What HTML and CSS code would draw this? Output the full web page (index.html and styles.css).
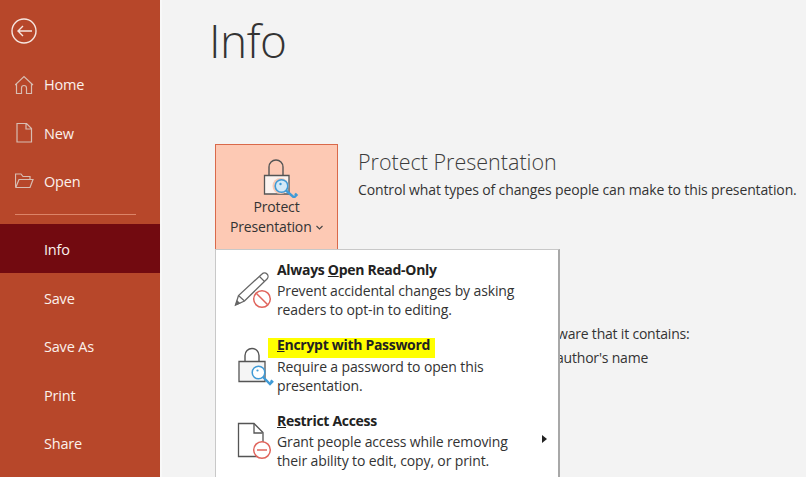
FILE: index.html
```html
<!DOCTYPE html>
<html lang="en">
<head>
<meta charset="utf-8">
<title>Info</title>
<link rel="stylesheet" href="styles.css">
</head>
<body>
<div class="app">
  <nav class="side">
    <div class="back">
      <svg width="26" height="26" viewBox="0 0 26 26" fill="none" stroke="#f6e6e0" stroke-width="1.4"><circle cx="13" cy="13" r="12"/><path d="M21 13H7M12 8L7 13l5 5"/></svg>
    </div>
    <a class="item"><svg class="ico" width="21" height="20" viewBox="0 0 21 20" fill="none" stroke="#d8bdb2" stroke-width="1.2"><path d="M0 10L9 1.500 18 10M1.500 8.500V18.500H6.500V13a2.500 2.500 0 0 1 5 0V18.500H16.500V8.500"/></svg>Home</a>
    <a class="item"><svg class="ico" width="21" height="20" viewBox="0 0 21 20" fill="none" stroke="#d8bdb2" stroke-width="1.2"><path d="M2 .5H11.500L16.500 5.500V19H2ZM11 1V6H16.500"/></svg>New</a>
    <a class="item"><svg class="ico" width="21" height="20" viewBox="0 0 21 20" fill="none" stroke="#d8bdb2" stroke-width="1.2"><path d="M.5 15.500V2H6L8 4.500H15V7.500M.5 15.500H15L18 7.500H4L1 15"/></svg>Open</a>
    <div class="rule"></div>
    <a class="item plain active">Info</a>
    <a class="item plain">Save</a>
    <a class="item plain">Save As</a>
    <a class="item plain">Print</a>
    <a class="item plain">Share</a>
  </nav>
  <main class="main">
    <h1 class="title">Info</h1>
    <section class="protect">
      <div class="btn">
        <svg class="btn-ico" width="36" height="40" viewBox="0 0 36 40" fill="none">
          <path d="M6 17V9a7 7 0 0 1 14 0v8" stroke="#555" stroke-width="1.400"/>
          <path d="M1.500 17.500H26V36H1.500Z" fill="#fbf3f0" stroke="#555" stroke-width="1.300"/>
          <circle cx="17.500" cy="28" r="8" fill="#f9c9b4"/>
          <circle cx="18.500" cy="28" r="6.300" fill="#d4e9f7" stroke="#3f9ad6" stroke-width="1.600"/>
          <circle cx="17.500" cy="26" r="1.200" fill="#3f9ad6"/>
          <path d="M23 32.500L31 39.500l2.500-2.500-1.500-1.500" stroke="#3f9ad6" stroke-width="2.400"/>
        </svg>
        <span class="btn-label">Protect<br>Presentation <svg class="chev" width="7" height="5" viewBox="0 0 7 5" fill="none" stroke="#444" stroke-width="1.100"><path d="M.5 1L3.500 4 6.500 1"/></svg></span>
      </div>
      <div class="protect-text">
        <h2 class="sub">Protect Presentation</h2>
        <p class="desc">Control what types of changes people can make to this presentation.</p>
        <div class="behind">
          <p class="behind-a">ware that it contains:</p>
          <p class="behind-b">author's name</p>
        </div>
      </div>
    </section>
    <div class="menu">
      <div class="opt">
        <svg class="opt-ico" width="40" height="40" viewBox="0 0 40 40" fill="none">
          <path d="M2.500 35L5.500 25.500 29 4a3.500 3.500 0 0 1 5 5L11.500 31Z" fill="#fff" stroke="#666" stroke-width="1.300"/>
          <path d="M5.500 25.500L11.500 31M26.500 6.500L31.500 11.500" stroke="#666" stroke-width="1.200"/>
          <path d="M2 35.500L7.500 33.500 4 30Z" fill="#666"/>
          <circle cx="29" cy="29" r="8.300" fill="#fff" stroke="#e0645c" stroke-width="1.500"/>
          <path d="M23.500 23.500l11 11" stroke="#e0645c" stroke-width="1.500"/>
        </svg>
        <div class="opt-text">
          <div class="opt-head">Always <u>O</u>pen Read-Only</div>
          <div class="opt-desc">Prevent accidental changes by asking<br>readers to opt-in to editing.</div>
        </div>
      </div>
      <div class="opt">
        <svg class="opt-ico" width="40" height="40" viewBox="0 0 40 40" fill="none">
          <path d="M12 15.500V9.500a7 7 0 0 1 14 0v6" stroke="#555" stroke-width="1.400"/>
          <path d="M6 15.500H32V35.500H6Z" fill="#f5f5f5" stroke="#555" stroke-width="1.300"/>
          <circle cx="25.500" cy="26.500" r="6.300" fill="#fff" stroke="#3f9ad6" stroke-width="1.500"/>
          <circle cx="24.500" cy="24.500" r="1.100" fill="#3f9ad6"/>
          <path d="M30 31L37 38l2.200-2.200-1.500-1.500" stroke="#3f9ad6" stroke-width="2.400"/>
        </svg>
        <div class="opt-text">
          <div class="opt-head"><span class="mark"><u>E</u>ncrypt with Password</span></div>
          <div class="opt-desc">Require a password to open this<br>presentation.</div>
        </div>
      </div>
      <div class="opt">
        <svg class="opt-ico" width="40" height="40" viewBox="0 0 40 40" fill="none">
          <path d="M5.500 2.500H21L30 11.500V35.500H5.500Z" fill="#fff" stroke="#555" stroke-width="1.300"/>
          <path d="M21 3V12H29.500" stroke="#555" stroke-width="1.300"/>
          <circle cx="29" cy="29" r="8.300" fill="#fff" stroke="#e0645c" stroke-width="1.500"/>
          <path d="M24 29h10" stroke="#e0645c" stroke-width="1.500"/>
        </svg>
        <div class="opt-text">
          <div class="opt-head"><u>R</u>estrict Access</div>
          <div class="opt-desc">Grant people access while removing<br>their ability to edit, copy, or print.</div>
        </div>
        <span class="arrow"></span>
      </div>
    </div>
  </main>
</div>
</body>
</html>
```
FILE: styles.css
```css
* { box-sizing: border-box; }
html, body { margin: 0; height: 100%; overflow: hidden; }
body { font-family: "Open Sans", "Noto Sans", sans-serif; background: #f3f3f3; color: #333; }
.app { display: flex; width: 806px; height: 477px; overflow: hidden; }
.side {
  width: 162px; flex: none; background: #b7472a; color: #fbf1ec;
  border-right: 2px solid #f8f8f8; display: flex; flex-direction: column;
}
.back { height: 60.500px; padding: 18px 0 0 11px; flex: none; }
.back svg { display: block; }
.item {
  height: 48.500px; flex: none; display: flex; align-items: center; gap: 8px;
  padding-left: 15px; font-size: 14.500px; letter-spacing: -.2px; color: #fbf1ec;
}
.item.plain { padding: 3px 0 0 44px; }
.item.active { background: #720a10; }
.ico { flex: none; }
.rule { height: 1px; background: #dc8468; margin: 8px 24px 9px 15px; flex: none; }
.main { position: relative; flex: 1; padding: 0 0 0 53px; min-width: 0; }
.title { margin: 7px 0 0 -6px; font-size: 46px; font-weight: 300; line-height: 67px; color: #333; letter-spacing: -.5px; }
.protect { display: flex; margin-top: 70px; gap: 20px; }
.btn {
  width: 123px; height: 106px; flex: none; background: #fdc9b4; border: 1px solid #d9694a;
  display: flex; flex-direction: column; align-items: center; padding-top: 13px;
}
.btn-ico { display: block; margin-left: 9px; flex: none; }
.btn-label { text-align: center; font-size: 14px; line-height: 19.500px; letter-spacing: -.15px; color: #333; margin-top: -1px; white-space: nowrap; }
.chev { vertical-align: 2px; margin-left: 1px; }
.protect-text { padding-top: 4px; }
.sub { margin: 0; font-size: 21.500px; font-weight: 300; line-height: 28px; color: #3c3c3c; white-space: nowrap; }
.desc { margin: 5px 0 0; font-size: 14px; line-height: 18px; letter-spacing: -.13px; white-space: nowrap; color: #333; }
.behind { margin-top: 126px; white-space: nowrap; font-size: 14px; letter-spacing: -.2px; line-height: 18px; }
.behind p { margin: 0 0 6px; }
.behind-a { padding-left: 199px; }
.behind-b { padding-left: 198px; }
.menu {
  position: absolute; left: 53px; top: 249px; width: 345px; height: 230px; background: #fff;
  border: 1px solid #c8c8c8; border-right: 2px solid #a8a8a8;
}
.opt { position: relative; display: flex; height: 75.500px; padding: 9.500px 0 0 17px; gap: 4px; }
.opt-ico { flex: none; margin-top: 10.500px; overflow: visible; }
.opt-text { font-size: 14px; letter-spacing: -.13px; line-height: 19px; color: #333; white-space: nowrap; }
.opt-head { font-weight: 700; color: #222; line-height: 19px; letter-spacing: -.3px; }
.opt-desc { margin-top: 2.500px; }
.mark {
  display: inline-block; height: 19px; padding: 0 5px 4px 9px; margin: 0 0 -4px -9px; box-sizing: content-box;
  background: linear-gradient(#ffff00, #ffff00) no-repeat 0 3px / 100% 20px;
}
.arrow { position: absolute; left: 326px; top: 34px; width: 0; height: 0; border-left: 5px solid #222; border-top: 4px solid transparent; border-bottom: 4px solid transparent; }
```
